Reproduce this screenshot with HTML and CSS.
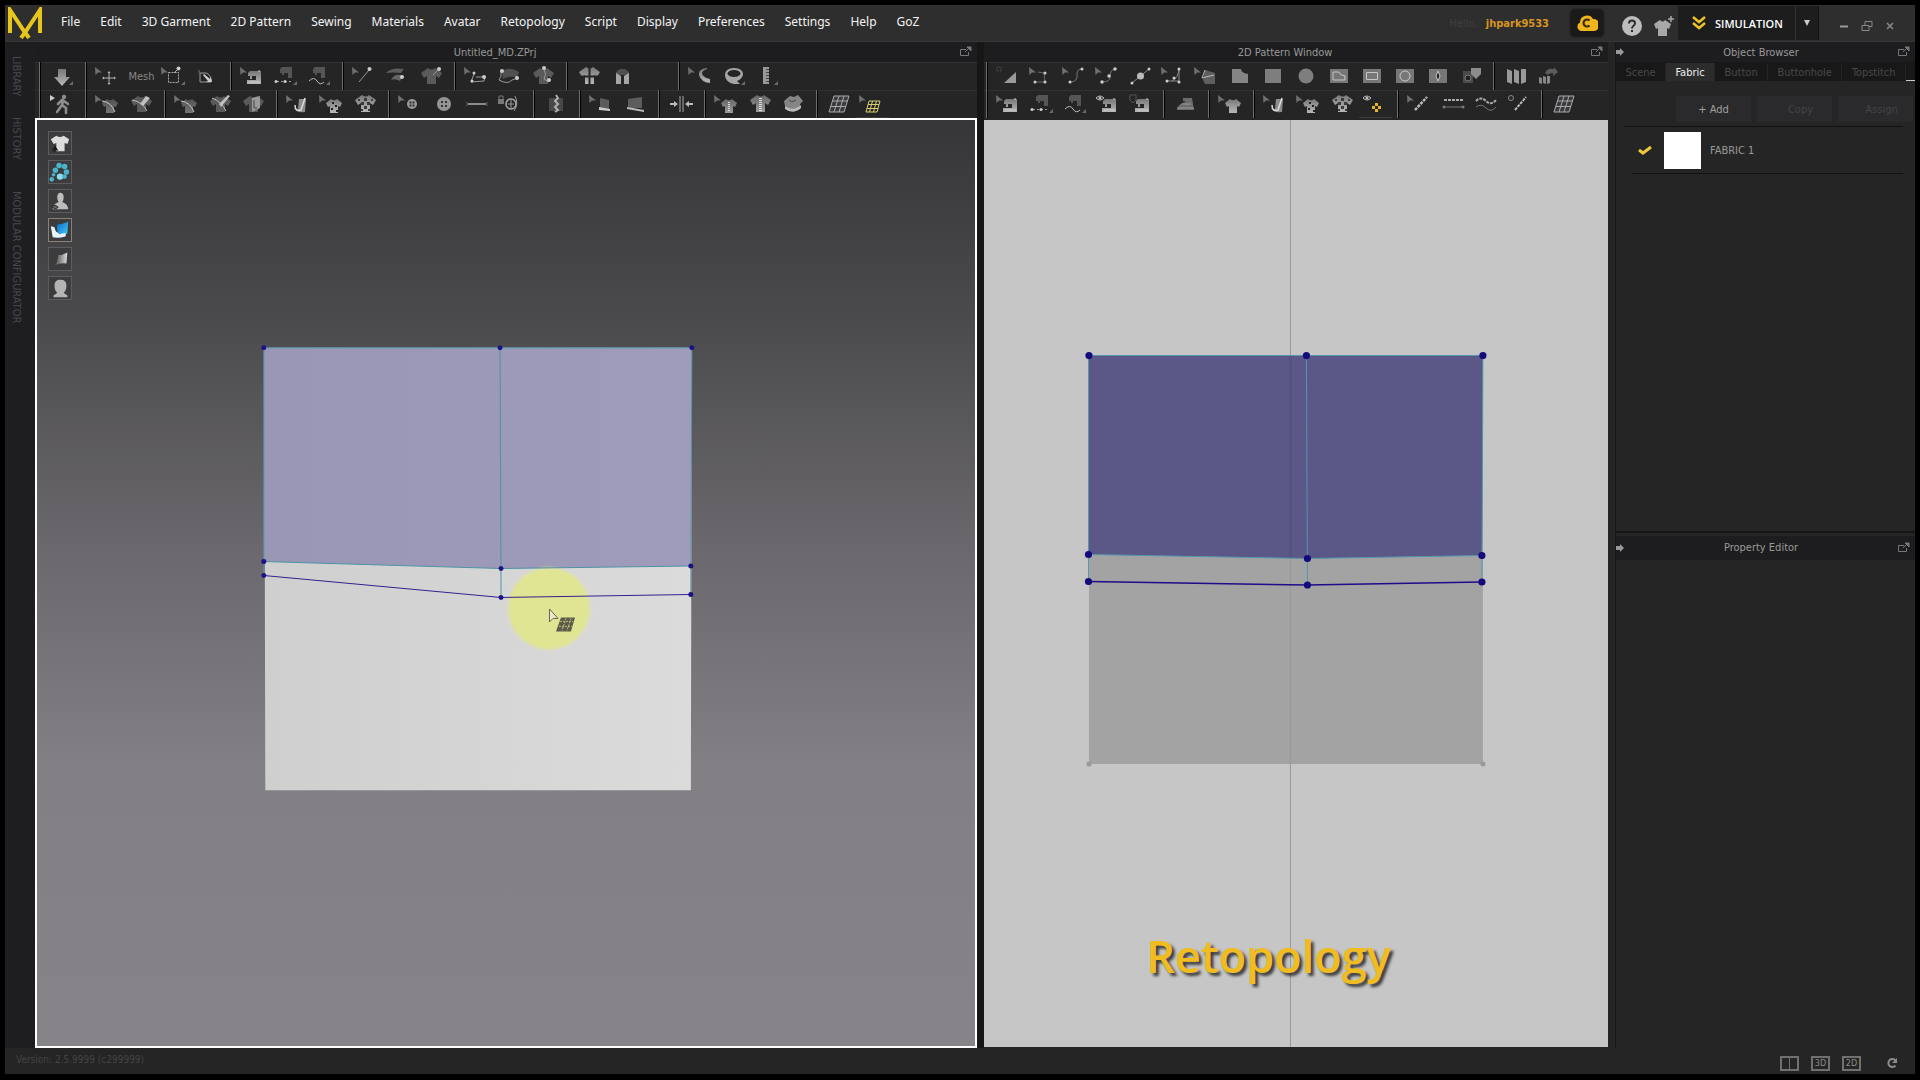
FILE: index.html
```html
<!DOCTYPE html>
<html lang="en">
<head>
  <meta charset="UTF-8">
  <meta name="viewport" content="width=device-width, initial-scale=1.0">
  <title>Untitled_MD.ZPrj</title>
  <link rel="stylesheet" href="styles.css">
</head>
<body>
  <!-- icon shapes, each tool icon is drawn on a 33x28 board -->
  <svg class="defs" aria-hidden="true">
    <defs>
      <linearGradient id="g-cloth" x1="0" y1="0" x2="1" y2="0">
        <stop offset="0" stop-color="#d0cfd0"/>
        <stop offset="1" stop-color="#dcdbdc"/>
      </linearGradient>
      <linearGradient id="g-mesh" x1="0" y1="0" x2="1" y2="0">
        <stop offset="0" stop-color="#9a96b6"/>
        <stop offset="1" stop-color="#9f9bbb"/>
      </linearGradient>
      <linearGradient id="g-metal" x1="0" y1="0" x2="0" y2="1">
        <stop offset="0" stop-color="#777"/>
        <stop offset="1" stop-color="#b8b8b8"/>
      </linearGradient>
      <linearGradient id="g-blue" x1="0" y1="0" x2="1" y2="1">
        <stop offset="0" stop-color="#0a6cc8"/>
        <stop offset="1" stop-color="#48c4f8"/>
      </linearGradient>
      <linearGradient id="g-grey" x1="0" y1="0" x2="1" y2="0">
        <stop offset="0" stop-color="#444"/>
        <stop offset="1" stop-color="#ddd"/>
      </linearGradient>
      <filter id="soft" x="-20%" y="-20%" width="140%" height="140%"><feGaussianBlur stdDeviation="1.5"/></filter>
    </defs>

    <symbol id="cur" viewBox="0 0 33 28"><path d="M3 5l7 5.500h-4l-2.500 2.500z" fill="#707070"/></symbol>
    <symbol id="tri" viewBox="0 0 33 28"><path d="M27 19v4h-4z" fill="#6c6c6c"/></symbol>
    <symbol id="machine" viewBox="0 0 33 28"><path d="M11 11l2-2h11v13h-14v-4h9v-4h-4v3h-2v-3h-2z" fill="url(#g-metal)"/><path d="M22 8v2M12 20h11" stroke="#ccc"/></symbol>
    <symbol id="machine-dim" viewBox="0 0 33 28"><path d="M10 7l2-2h10v11h-4v-5h-4v2h-2v-2h-2z" fill="#555"/></symbol>
    <symbol id="shirt-s" viewBox="0 0 33 28"><path d="M10 13l5-4q3 2.500 6 0l5 4-2 4-2-1v7h-8v-7l-2 1z" fill="url(#g-metal)"/></symbol>
    <symbol id="shirt-l" viewBox="0 0 33 28"><path d="M6 10l7-5q4 3 7 0l7 5-3 5-3-2v9h-9v-9l-3 2z" fill="url(#g-metal)"/></symbol>
    <symbol id="shirt-d" viewBox="0 0 33 28"><path d="M6 11l7-5q4 3 7 0l7 5-3 5-3-2v8h-9v-8l-3 2z" fill="#5a5a5a"/></symbol>
    <symbol id="eye" viewBox="0 0 33 28"><path d="M4 8q3.500-4 8 0q-4 4-8 0z" fill="none" stroke="#bbb"/><circle cx="8" cy="8" r="1.500" fill="#bbb"/></symbol>

    <symbol id="i-down" viewBox="0 0 33 28"><path d="M12 7h8v8h4l-8 9-8-9h4z" fill="url(#g-metal)"/><use href="#tri"/></symbol>
    <symbol id="i-move" viewBox="0 0 33 28"><use href="#cur"/><path d="M17 10v12M11 16h12" stroke="#b5b5b5" fill="none"/><path d="M17 9l1.500 2h-3zM17 23l1.500-2h-3zM10 16l2-1.500v3zM24 16l-2-1.500v3z" fill="#b5b5b5"/></symbol>
    <symbol id="i-box" viewBox="0 0 33 28"><use href="#cur"/><path d="M10.500 10.500h10v10h-10z" fill="none" stroke="#aaa" stroke-dasharray="2 1"/><path d="M16 11l4-4" stroke="#aaa"/><circle cx="20.500" cy="6.500" r="2" fill="#ccc"/><use href="#tri"/></symbol>
    <symbol id="i-fold" viewBox="0 0 33 28"><path d="M9 11h6q5 1 5 9H9z" fill="none" stroke="#999"/><path d="M13 12l6 5 1-2 1 5h-6l2-1-5-6z" fill="#ccc"/><path d="M8 8v3" stroke="#777"/></symbol>
    <symbol id="i-sew" viewBox="0 0 33 28"><use href="#cur"/><use href="#machine"/></symbol>
    <symbol id="i-sewseg" viewBox="0 0 33 28"><use href="#machine-dim"/><path d="M7 19.500h14" stroke="#999" stroke-dasharray="2 2"/><circle cx="6" cy="19.500" r="1.500" fill="#ccc"/><circle cx="15" cy="19.500" r="1.500" fill="#ccc"/><use href="#tri"/></symbol>
    <symbol id="i-sewfree" viewBox="0 0 33 28"><use href="#machine-dim"/><path d="M6 19q5-5 8 0t7 1" fill="none" stroke="#bbb"/><use href="#tri"/></symbol>
    <symbol id="i-pin" viewBox="0 0 33 28"><use href="#cur"/><path d="M10 20L20 8" stroke="#999"/><circle cx="20.500" cy="7" r="2" fill="#ccc"/></symbol>
    <symbol id="i-roll" viewBox="0 0 33 28"><path d="M4 11q5-6 18-4l-3 4q-8-1-15 0z" fill="#5c5c5c"/><path d="M9 18q4-8 12-4l-3 5q-5-3-9-1z" fill="#666"/><circle cx="20" cy="15" r="2" fill="#ccc"/></symbol>
    <symbol id="i-tack" viewBox="0 0 33 28"><use href="#shirt-d"/><path d="M18 13l5-5" stroke="#999"/><circle cx="24" cy="7" r="2" fill="#ccc"/></symbol>
    <symbol id="i-curve" viewBox="0 0 33 28"><use href="#cur"/><path d="M13 12l-3 8 13-1 1-4-9 0" fill="none" stroke="#999"/><circle cx="13" cy="11" r="1.500" fill="#ccc"/><circle cx="11" cy="19" r="1.500" fill="#ccc"/><circle cx="23" cy="15" r="2" fill="#ccc"/></symbol>
    <symbol id="i-curve2" viewBox="0 0 33 28"><path d="M8 9q8-5 17 1l-2 6q-7-3-14 1z" fill="#505050"/><path d="M7 9q1 6-2 9 9 5 13 0l6-2" fill="none" stroke="#999"/><circle cx="8" cy="9" r="2" fill="#ccc"/><circle cx="23" cy="16" r="2" fill="#ccc"/></symbol>
    <symbol id="i-curve3" viewBox="0 0 33 28"><use href="#shirt-d"/><path d="M17 7q3 6 0 10l5 3" fill="none" stroke="#999"/><circle cx="17" cy="6" r="2" fill="#ccc"/><circle cx="22" cy="18" r="2" fill="#ccc"/></symbol>
    <symbol id="i-shirt4" viewBox="0 0 33 28"><use href="#shirt-l"/><path d="M16.500 4v20M8 14.500h17" stroke="#252525" stroke-width="2"/></symbol>
    <symbol id="i-vest" viewBox="0 0 33 28"><path d="M10 10l4-3h5l4 3v3h-13z" fill="#505050"/><path d="M10 11l5 3v8h-5zM23 11l-5 3v8h5z" fill="#a5a5a5"/></symbol>
    <symbol id="i-tape" viewBox="0 0 33 28"><use href="#cur"/><path d="M22 6q-9 1-8 7 2 7 11 8v-4q-8-2-8-6 0-2 5-4z" fill="url(#g-metal)"/></symbol>
    <symbol id="i-ring" viewBox="0 0 33 28"><path d="M16 6c6 0 9 3 9 6s-3 6-6 7l3 3h-6c-6-1-9-5-9-9 0-4 3-7 9-7z" fill="#a5a5a5"/><ellipse cx="16" cy="11.500" rx="6.500" ry="3.500" fill="#252525"/><use href="#tri"/></symbol>
    <symbol id="i-ruler" viewBox="0 0 33 28"><path d="M12 5h6v17h-6z" fill="#999"/><path d="M15 7.500h3M15 10.500h3M15 13.500h3M15 16.500h3M15 19.500h3" stroke="#444"/><use href="#tri"/></symbol>

    <symbol id="i-walk" viewBox="0 0 33 28"><path d="M4 5l5 3-5 3z" fill="#ccc"/><circle cx="18" cy="7" r="2.200" fill="#8c8c8c"/><path d="M17 10l-1 6M16 10l-4 4M18 11l4 3M16 15l-5 7M16 15l4 3 0 5" stroke="#8c8c8c" stroke-width="2.600" stroke-linecap="round" fill="none"/></symbol>
    <symbol id="i-line" viewBox="0 0 33 28"><use href="#cur"/><use href="#shirt-s" opacity=".55"/><path d="M10 11q9 1 13 11" fill="none" stroke="#ccc"/></symbol>
    <symbol id="i-brush" viewBox="0 0 33 28"><use href="#shirt-d"/><path d="M7 10q11 2 15 11" fill="none" stroke="#bbb"/><path d="M15 14l6-8 4 2-7 8z" fill="#c0c0c0"/></symbol>
    <symbol id="i-check" viewBox="0 0 33 28"><use href="#shirt-d"/><path d="M8 8q10 4 14 13" fill="none" stroke="#bbb"/><path d="M15 14l9-9 2 1-9 11z" fill="#c0c0c0"/></symbol>
    <symbol id="i-layer" viewBox="0 0 33 28"><use href="#shirt-d"/><path d="M15 8l8-2v12l-8 4z" fill="#999"/><path d="M17 10v8h3" stroke="#444" fill="none"/></symbol>
    <symbol id="i-texture" viewBox="0 0 33 28"><use href="#cur"/><path d="M16 9h7l-1 13q-9 1-11-4l4 1z" fill="#8c8c8c"/><path d="M12 15q0 7 6 5l4-12" fill="none" stroke="#ddd" stroke-width="1.500"/></symbol>
    <symbol id="i-graphic" viewBox="0 0 33 28"><use href="#cur"/><use href="#shirt-s"/><path d="M16 12h2v2h-2zM19 15h2v2h-2zM15 18h2v2h-2zM20 20h2v2h-2z" fill="#222"/></symbol>
    <symbol id="i-graphic2" viewBox="0 0 33 28"><use href="#shirt-l"/><path d="M15 8h3v3h-3zM12 12h3v3h-3zM18 12h3v3h-3zM15 16h3v3h-3zM9 9h2v2H9zM22 9h2v2h-2zM19 19h2v2h-2zM12 19h2v2h-2z" fill="#3a3a3a"/></symbol>
    <symbol id="i-btn" viewBox="0 0 33 28"><use href="#cur"/><circle cx="17" cy="14" r="5" fill="#999"/><path d="M14.500 11.500h2v2h-2zM17.500 11.500h2v2h-2zM14.500 14.500h2v2h-2zM17.500 14.500h2v2h-2z" fill="#333"/></symbol>
    <symbol id="i-btn2" viewBox="0 0 33 28"><circle cx="16" cy="14" r="7" fill="#949494"/><path d="M13 11h2v2h-2zM17 11h2v2h-2zM13 15h2v2h-2zM17 15h2v2h-2z" fill="#333"/></symbol>
    <symbol id="i-hole" viewBox="0 0 33 28"><path d="M7 14h18" stroke="#8c8c8c" stroke-width="2"/><path d="M6 12v4M26 12v4" stroke="#666"/></symbol>
    <symbol id="i-lock" viewBox="0 0 33 28"><path d="M4 9h6v5H4z" fill="#777"/><path d="M5 9V6h4v3" stroke="#777" fill="none"/><circle cx="17" cy="14" r="5" fill="none" stroke="#aaa" stroke-width="1.500"/><path d="M14 14h6M17 10v8M21 6q4 8-1 15" stroke="#999" fill="none"/></symbol>
    <symbol id="i-zip" viewBox="0 0 33 28"><path d="M9 8h14v13H9z" fill="#484848"/><path d="M16 5l2 3-3 3 3 3-3 3 3 3-3 2" stroke="#b0b0b0" stroke-width="2" fill="none"/></symbol>
    <symbol id="i-steam" viewBox="0 0 33 28"><use href="#cur"/><path d="M14 8l9 2v9H14z" fill="#5c5c5c"/><path d="M13 17l11 2v2l-11-1z" fill="#ccc"/></symbol>
    <symbol id="i-steam2" viewBox="0 0 33 28"><path d="M9 9l14-2v11H9z" fill="#5c5c5c"/><path d="M8 17l17 3v2L8 19z" fill="#bbb"/></symbol>
    <symbol id="i-merge" viewBox="0 0 33 28"><path d="M15 6v16M18 6v16" stroke="#666" stroke-width="2"/><path d="M5 14h4M28 14h-4" stroke="#bbb" stroke-width="2"/><path d="M9 11l4 3-4 3zM24 11l-4 3 4 3z" fill="#bbb"/></symbol>
    <symbol id="i-zipshirt" viewBox="0 0 33 28"><use href="#cur"/><use href="#shirt-s" opacity=".8"/><path d="M18 12v10" stroke="#ddd" stroke-width="2" stroke-dasharray="1 1"/></symbol>
    <symbol id="i-zipshirt2" viewBox="0 0 33 28"><use href="#shirt-l" opacity=".8"/><path d="M16.500 8v14" stroke="#ddd" stroke-width="3" stroke-dasharray="1 1"/></symbol>
    <symbol id="i-wrap" viewBox="0 0 33 28"><path d="M7 11l6-5 4 1 4-2 5 6-3 3v4q-4 5-10 2l-5-4z" fill="#858585"/><path d="M8 16q8 6 16-1v3q-8 7-16 1z" fill="#bbb"/><path d="M12 10l3 2 4-2" stroke="#444" fill="none"/></symbol>
    <symbol id="i-mesh" viewBox="0 0 33 28"><path d="M11 6h15l-5 16H6z" fill="#3a3a3e" stroke="#aaa"/><path d="M16 6l-5 16M21 6l-5 16M9.500 11h15M8 16.500h15" stroke="#aaa" fill="none"/></symbol>
    <symbol id="i-meshon" viewBox="0 0 33 28"><use href="#cur"/><path d="M13 11h11l-3 11H10zM16.500 11l-3 11M20.500 11l-3 11M12 14.500h11M11 18.500h11" stroke="#d6cf70" fill="none"/></symbol>

    <symbol id="i-scale" viewBox="0 0 33 28"><path d="M23 10v11H11z" fill="#999"/><path d="M4 5h4v4H4z" fill="none" stroke="#555" stroke-dasharray="1 1"/></symbol>
    <symbol id="i-pt" viewBox="0 0 33 28"><use href="#cur"/><path d="M8 20h11l-1-9-6-1" fill="none" stroke="#666"/><circle cx="9" cy="20" r="1.500" fill="#ccc"/><circle cx="19" cy="20" r="1.500" fill="#ccc"/><circle cx="19" cy="11" r="1.500" fill="#ccc"/></symbol>
    <symbol id="i-cv" viewBox="0 0 33 28"><use href="#cur"/><path d="M11 20q8 0 7-8 0-5 5-5" fill="none" stroke="#777"/><circle cx="11" cy="20" r="1.500" fill="#ccc"/><circle cx="23" cy="7" r="1.500" fill="#ccc"/></symbol>
    <symbol id="i-cv2" viewBox="0 0 33 28"><use href="#cur"/><path d="M10 20q9 0 8-6 0-6 5-7" fill="none" stroke="#777"/><circle cx="10" cy="20" r="1.700" fill="#ccc"/><circle cx="17" cy="14" r="1.700" fill="#ccc"/><circle cx="23" cy="7" r="1.700" fill="#ccc"/></symbol>
    <symbol id="i-split" viewBox="0 0 33 28"><path d="M7 21L24 7" stroke="#888"/><circle cx="7" cy="21" r="1.500" fill="#ccc"/><circle cx="24" cy="7" r="1.500" fill="#ccc"/><circle cx="15.500" cy="14" r="3.500" fill="#bbb"/></symbol>
    <symbol id="i-seam" viewBox="0 0 33 28"><use href="#cur"/><path d="M9 19h12V7q-1 9-7 12" fill="none" stroke="#888"/><circle cx="9" cy="19" r="1.500" fill="#ccc"/><circle cx="16" cy="16" r="1.500" fill="#ccc"/><circle cx="21" cy="7" r="1.500" fill="#ccc"/><circle cx="21" cy="20" r="1.500" fill="#ccc"/></symbol>
    <symbol id="i-pleat" viewBox="0 0 33 28"><use href="#cur"/><path d="M14 8l10 3v11H14l-2-4z" fill="#5e5e5e"/><path d="M14 8l-3 8 12-3" fill="none" stroke="#bbb"/></symbol>
    <symbol id="i-poly" viewBox="0 0 33 28"><path d="M8 7h9q0 4 7 5v9H8z" fill="#858585"/></symbol>
    <symbol id="i-rect" viewBox="0 0 33 28"><path d="M8 7h16v14H8z" fill="#7e7e7e"/></symbol>
    <symbol id="i-circle" viewBox="0 0 33 28"><circle cx="16" cy="14" r="7.500" fill="#7e7e7e"/></symbol>
    <symbol id="i-inpoly" viewBox="0 0 33 28"><path d="M7 7h18v14H7z" fill="#777"/><path d="M10 10h6q0 3 6 4v4H10z" fill="none" stroke="#c8c8c8"/></symbol>
    <symbol id="i-inrect" viewBox="0 0 33 28"><path d="M7 7h18v14H7z" fill="#777"/><path d="M10.500 10.500h11v7h-11z" fill="none" stroke="#c8c8c8"/></symbol>
    <symbol id="i-incircle" viewBox="0 0 33 28"><path d="M7 7h18v14H7z" fill="#777"/><circle cx="16" cy="14" r="5" fill="none" stroke="#c8c8c8"/></symbol>
    <symbol id="i-dart" viewBox="0 0 33 28"><path d="M7 7h18v14H7z" fill="#777"/><path d="M16 9l2 5-2 5-2-5z" fill="#222" stroke="#c8c8c8"/></symbol>
    <symbol id="i-trace" viewBox="0 0 33 28"><path d="M8 9h10v12H8z" fill="#4a4a4a"/><path d="M16 6h10v6l-5 5-5-5z" fill="#8c8c8c"/><circle cx="13" cy="16" r="3" fill="#222" stroke="#777"/></symbol>
    <symbol id="i-pleats" viewBox="0 0 33 28"><path d="M7 7l5 2v13l-5-2zM14 7l5 2v13l-5-2zM21 7h5v13l-5 2z" fill="#999"/></symbol>
    <symbol id="i-pleats2" viewBox="0 0 33 28"><path d="M6 15l3 1v6l-3-1zM10 14l3 1v7l-3-1zM14 14h3v7l-3 1z" fill="#888"/><path d="M12 11q2-5 9-4v-2l4 5-5 4v-3q-4 0-5 2z" fill="#5c5c5c"/></symbol>
    <symbol id="i-sewshow" viewBox="0 0 33 28"><use href="#eye"/><use href="#machine"/></symbol>
    <symbol id="i-sewlen" viewBox="0 0 33 28"><path d="M5 5h6v5l-3 3-3-3z" fill="none" stroke="#555"/><use href="#machine"/></symbol>
    <symbol id="i-iron" viewBox="0 0 33 28"><path d="M7 20q1-7 9-8l-3-1V8h9l2 12z" fill="#6c6c6c"/><path d="M7 18h17M12 14h9" stroke="#999"/></symbol>
    <symbol id="i-shirtsel" viewBox="0 0 33 28"><use href="#cur"/><use href="#shirt-s"/></symbol>
    <symbol id="i-texshow" viewBox="0 0 33 28"><use href="#eye"/><path d="M16 13h3v3h-3zM16 19h3v3h-3zM13 16h3v3h-3zM19 16h3v3h-3z" fill="#e8b32c"/></symbol>
    <symbol id="i-stitch" viewBox="0 0 33 28"><use href="#cur"/><path d="M11 20L23 7" stroke="#bbb" stroke-width="2.500" stroke-dasharray="3 1"/></symbol>
    <symbol id="i-stitch2" viewBox="0 0 33 28"><path d="M7 10h19" stroke="#aaa" stroke-width="2" stroke-dasharray="3 1"/><path d="M7 17h19" stroke="#777"/><circle cx="7" cy="17" r="1.500" fill="#777"/><circle cx="26" cy="17" r="1.500" fill="#777"/></symbol>
    <symbol id="i-stitch3" viewBox="0 0 33 28"><path d="M6 11q5-5 10 0t10-1" fill="none" stroke="#aaa" stroke-width="2" stroke-dasharray="3 1"/><path d="M6 17q5-4 10 1t10-1" fill="none" stroke="#777"/></symbol>
    <symbol id="i-stitch4" viewBox="0 0 33 28"><circle cx="8" cy="8" r="2.500" fill="none" stroke="#888"/><path d="M12 20L23 7" stroke="#bbb" stroke-width="2" stroke-dasharray="3 1"/></symbol>

    <symbol id="i-popout" viewBox="0 0 12 12"><path d="M6 3.500H.5v6h8V6" fill="none" stroke="#777"/><path d="M5 6l4-4M7 1h4v4z" fill="#777" stroke="#777"/></symbol>
    <symbol id="i-dock" viewBox="0 0 8 8"><path d="M0 2h4V0l4 4-4 4V6H0z" fill="#999"/></symbol>
  </svg>

  <div class="app">
    <header class="topbar">
      <svg class="logo" viewBox="0 0 34 32" role="img" aria-label="MD"><path d="M2 26V3l14 21 5 7M32 26V3L18 24l-5 7" fill="none" stroke="#e6c51c" stroke-width="4"/></svg>
      <nav class="menu">
        <a href="#file">File</a>
        <a href="#edit">Edit</a>
        <a href="#garment">3D Garment</a>
        <a href="#pattern">2D Pattern</a>
        <a href="#sewing">Sewing</a>
        <a href="#materials">Materials</a>
        <a href="#avatar">Avatar</a>
        <a href="#retopology">Retopology</a>
        <a href="#script">Script</a>
        <a href="#display">Display</a>
        <a href="#preferences">Preferences</a>
        <a href="#settings">Settings</a>
        <a href="#help">Help</a>
        <a href="#goz">GoZ</a>
      </nav>
      <div class="account">
        <span class="hello">Hello,</span>
        <a href="#account" class="user">jhpark9533</a>
      </div>
      <button class="cloud" aria-label="Cloud"><svg viewBox="0 0 22 18"><path d="M5 17a4.500 4.500 0 0 1-1-8.500A7 7 0 0 1 17 5a5 5 0 0 1 1 12z" fill="#f0b51e"/><path d="M13.500 6.500a3.500 3.500 0 1 0 0 5" fill="none" stroke="#3a2a08" stroke-width="2.200"/></svg></button>
      <div class="quick">
        <button aria-label="Help"><svg viewBox="0 0 22 22"><circle cx="11" cy="11" r="10" fill="#bdbdbd"/><path d="M8 8.500q0-3 3-3t3 2.800q0 1.700-1.700 2.700-1.300.8-1.300 2.500" fill="none" stroke="#2c2c2c" stroke-width="2"/><path d="M10 15h2v2h-2z" fill="#2c2c2c"/></svg></button>
        <button aria-label="Add garment"><svg viewBox="0 0 22 22"><path d="M1 9l6-4q3 3 5 0l6 4-2 5-2-1v8H5v-8l-2 1z" fill="#a8a8a8"/><path d="M18 1v6M15 4h6" stroke="#a8a8a8" stroke-width="1.500"/></svg></button>
      </div>
      <div class="mode">
        <button class="mode-main"><svg viewBox="0 0 14 14"><path d="M1 1l6 5 6-5M1 7l6 5 6-5" fill="none" stroke="#ecc42a" stroke-width="2.500"/></svg>SIMULATION</button>
        <button class="mode-more" aria-label="Choose mode"><svg viewBox="0 0 8 6"><path d="M1 0h6L4 6z" fill="#ccc"/></svg></button>
      </div>
      <div class="winbtns">
        <button aria-label="Minimize"><svg viewBox="0 0 12 12"><path d="M2 6.500h8" stroke="#999" stroke-width="2"/></svg></button>
        <button aria-label="Restore"><svg viewBox="0 0 12 12"><path d="M1 5.500h7v5H1zM4 5V1.500h7v5H8" fill="none" stroke="#888"/></svg></button>
        <button aria-label="Close"><svg viewBox="0 0 12 12"><path d="M3 3l6 6M9 3l-6 6" stroke="#888" stroke-width="1.500"/></svg></button>
      </div>
    </header>

    <div class="workspace">
      <aside class="rail">
        <button>LIBRARY</button>
        <button>HISTORY</button>
        <button>MODULAR CONFIGURATOR</button>
      </aside>

      <main class="panes">
        <section class="pane pane-3d">
          <div class="titlebar"><h2>Untitled_MD.ZPrj</h2><button class="popout" aria-label="Undock"><svg><use href="#i-popout"/></svg></button></div>
          <div class="toolbar">
            <div class="group"><button aria-label="Simulate"><svg><use href="#i-down"/></svg></button></div>
            <div class="group">
              <button aria-label="Select and move"><svg><use href="#i-move"/></svg></button>
              <button class="mesh-label">Mesh</button>
              <button aria-label="Transform"><svg><use href="#i-box"/></svg></button>
              <button aria-label="Fold"><svg><use href="#i-fold"/></svg></button>
            </div>
            <div class="group">
              <button aria-label="Edit sewing"><svg><use href="#i-sew"/></svg></button>
              <button aria-label="Segment sewing"><svg><use href="#i-sewseg"/></svg></button>
              <button aria-label="Free sewing"><svg><use href="#i-sewfree"/></svg></button>
            </div>
            <div class="group">
              <button aria-label="Edit tack"><svg><use href="#i-pin"/></svg></button>
              <button aria-label="Tack"><svg><use href="#i-roll"/></svg></button>
              <button aria-label="Tack on avatar"><svg><use href="#i-tack"/></svg></button>
            </div>
            <div class="group">
              <button aria-label="Edit 3D pen"><svg><use href="#i-curve"/></svg></button>
              <button aria-label="3D pen avatar"><svg><use href="#i-curve2"/></svg></button>
              <button aria-label="3D pen garment"><svg><use href="#i-curve3"/></svg></button>
            </div>
            <div class="group">
              <button aria-label="Arrange"><svg><use href="#i-shirt4"/></svg></button>
              <button aria-label="Drape"><svg><use href="#i-vest"/></svg></button>
              <span class="blank"></span>
            </div>
            <div class="group">
              <button aria-label="Edit tape"><svg><use href="#i-tape"/></svg></button>
              <button aria-label="Circumference"><svg><use href="#i-ring"/></svg></button>
              <button aria-label="Length"><svg><use href="#i-ruler"/></svg></button>
            </div>
          </div>
          <div class="toolbar">
            <div class="group"><button aria-label="Walk"><svg><use href="#i-walk"/></svg></button></div>
            <div class="group">
              <button aria-label="Edit line"><svg><use href="#i-line"/></svg></button>
              <button aria-label="Brush"><svg><use href="#i-brush"/></svg></button>
            </div>
            <div class="group">
              <button aria-label="Edit style line"><svg><use href="#i-line"/></svg></button>
              <button aria-label="Style line"><svg><use href="#i-check"/></svg></button>
              <button aria-label="Flatten"><svg><use href="#i-layer"/></svg></button>
            </div>
            <div class="group">
              <button aria-label="Edit texture"><svg><use href="#i-texture"/></svg></button>
              <button aria-label="Edit graphic"><svg><use href="#i-graphic"/></svg></button>
              <button aria-label="Graphic"><svg><use href="#i-graphic2"/></svg></button>
            </div>
            <div class="group">
              <button aria-label="Edit button"><svg><use href="#i-btn"/></svg></button>
              <button aria-label="Button"><svg><use href="#i-btn2"/></svg></button>
              <button aria-label="Buttonhole"><svg><use href="#i-hole"/></svg></button>
              <button aria-label="Fasten button"><svg><use href="#i-lock"/></svg></button>
            </div>
            <div class="group"><button aria-label="Zipper"><svg><use href="#i-zip"/></svg></button></div>
            <div class="group">
              <button aria-label="Edit binding"><svg><use href="#i-steam"/></svg></button>
              <button aria-label="Binding"><svg><use href="#i-steam2"/></svg></button>
            </div>
            <div class="group"><button aria-label="Merge"><svg><use href="#i-merge"/></svg></button></div>
            <div class="group">
              <button aria-label="Edit measure"><svg><use href="#i-zipshirt"/></svg></button>
              <button aria-label="Measure"><svg><use href="#i-zipshirt2"/></svg></button>
              <button aria-label="Wrap measure"><svg><use href="#i-wrap"/></svg></button>
            </div>
            <div class="group">
              <button aria-label="Quad mesh"><svg><use href="#i-mesh"/></svg></button>
              <button class="active" aria-label="Retopology"><svg><use href="#i-meshon"/></svg></button>
            </div>
          </div>
          <div class="view view-3d">
            <svg class="scene" viewBox="37 120 938 927" role="img" aria-label="Garment">
              <path d="M264 348h428l-1 443H265z" fill="url(#g-cloth)"/>
              <path d="M263.500 348H692l-1 218.500L501 569 263.500 562z" fill="url(#g-mesh)"/>
              <circle cx="549" cy="609" r="41" fill="#e0e594" filter="url(#soft)"/>
              <path d="M263.500 576V348H692l-1 247M500 348l1 250M263.500 562l237.500 7 190-2.500" fill="none" stroke="#4d93a5"/>
              <path d="M263.500 576L501 598l190-3" fill="none" stroke="#32208c"/>
              <g fill="#1c1286">
                <circle cx="263.500" cy="348" r="2.500"/><circle cx="500" cy="348" r="2.500"/><circle cx="692" cy="348" r="2.500"/>
                <circle cx="263.500" cy="562" r="2.500"/><circle cx="501" cy="569" r="2.500"/><circle cx="691" cy="566.500" r="2.500"/>
                <circle cx="263.500" cy="576" r="2.500"/><circle cx="501" cy="598" r="2.500"/><circle cx="691" cy="595" r="2.500"/>
              </g>
              <path d="M549.500 609.500v13l3.500-3.500h5z" fill="#eee9c8" stroke="#66664c"/>
              <path d="M561 618h14l-4 14h-15z" fill="#5c5c48"/>
              <path d="M560 622h13M559 627h13M566 619l-4 12M571 619l-4 12" stroke="#b8bb80" stroke-dasharray="2 1"/>
            </svg>
            <div class="view-tools">
              <button aria-label="Show garment"><svg viewBox="0 0 24 24"><path d="M2 8l6-4q4 3 8 0l6 4-2 5-3-1v9H8v-9l-3 1z" fill="#dcdcdc"/><circle cx="6" cy="19" r="2.500" fill="#222"/><path d="M6 15v3l4 2" stroke="#222"/></svg></button>
              <button aria-label="Show trims"><svg viewBox="0 0 24 24"><g fill="#4ab4cc"><circle cx="7" cy="10" r="3"/><circle cx="11" cy="5" r="3"/><circle cx="17" cy="6" r="3"/><circle cx="19" cy="12" r="3"/><circle cx="12" cy="17" r="3.500" fill="#8adcec"/><circle cx="17" cy="17" r="2.500"/><circle cx="5" cy="15" r="2"/><circle cx="3" cy="20" r="2.500"/></g></svg></button>
              <button aria-label="Show avatar"><svg viewBox="0 0 24 24"><path d="M9 8q0-5 3.500-5T16 8q0 4-1.500 5 6 2 6.500 8H4q0-6 6.500-8Q9 12 9 8z" fill="#bcbcbc"/><path d="M3 18q4-3 7 1-4 3-7-1z" fill="#666" stroke="#222"/></svg></button>
              <button class="on" aria-label="Textured surface"><svg viewBox="0 0 24 24"><path d="M2 8l4 1q1 6 5 6l8-1-1 5q-7 2-14 1-1-6-2-12z" fill="#e8f4fc"/><path d="M9 6q5 0 12-3l-1 13q-5-1-9 1-3-5-2-11z" fill="url(#g-blue)"/></svg></button>
              <button aria-label="Thick surface"><svg viewBox="0 0 24 24"><path d="M10 8q5 0 10-3l-1 12q-6-1-13 2 4-4 4-11z" fill="url(#g-grey)"/></svg></button>
              <button aria-label="Avatar surface"><svg viewBox="0 0 24 24"><path d="M6 9q0-6 6.500-6T19 9q0 6-3 8 1 2 4 3v2H5v-2q3-1 4-3-3-2-3-8z" fill="#b4b4b4"/></svg></button>
            </div>
          </div>
        </section>

        <section class="pane pane-2d">
          <div class="titlebar"><h2>2D Pattern Window</h2><button class="popout" aria-label="Undock"><svg><use href="#i-popout"/></svg></button></div>
          <div class="toolbar">
            <div class="group">
              <button aria-label="Transform pattern"><svg><use href="#i-scale"/></svg></button>
              <button aria-label="Edit pattern"><svg><use href="#i-pt"/></svg></button>
              <button aria-label="Edit curve point"><svg><use href="#i-cv"/></svg></button>
              <button aria-label="Edit curvature"><svg><use href="#i-cv2"/></svg></button>
              <button aria-label="Add point"><svg><use href="#i-split"/></svg></button>
              <button aria-label="Seam allowance"><svg><use href="#i-seam"/></svg></button>
              <button aria-label="Spread"><svg><use href="#i-pleat"/></svg></button>
              <button aria-label="Polygon"><svg><use href="#i-poly"/></svg></button>
              <button aria-label="Rectangle"><svg><use href="#i-rect"/></svg></button>
              <button aria-label="Circle"><svg><use href="#i-circle"/></svg></button>
              <button aria-label="Internal polygon"><svg><use href="#i-inpoly"/></svg></button>
              <button aria-label="Internal rectangle"><svg><use href="#i-inrect"/></svg></button>
              <button aria-label="Internal circle"><svg><use href="#i-incircle"/></svg></button>
              <button aria-label="Dart"><svg><use href="#i-dart"/></svg></button>
              <button aria-label="Trace"><svg><use href="#i-trace"/></svg></button>
            </div>
            <div class="group">
              <button aria-label="Pleats fold"><svg><use href="#i-pleats"/></svg></button>
              <button aria-label="Pleats sewing"><svg><use href="#i-pleats2"/></svg></button>
            </div>
          </div>
          <div class="toolbar">
            <div class="group">
              <button aria-label="Edit sewing"><svg><use href="#i-sew"/></svg></button>
              <button aria-label="Segment sewing"><svg><use href="#i-sewseg"/></svg></button>
              <button aria-label="Free sewing"><svg><use href="#i-sewfree"/></svg></button>
              <button aria-label="Show sewing"><svg><use href="#i-sewshow"/></svg></button>
              <button aria-label="Check sewing length"><svg><use href="#i-sewlen"/></svg></button>
            </div>
            <div class="group"><button aria-label="Iron"><svg><use href="#i-iron"/></svg></button></div>
            <div class="group"><button aria-label="Select garment"><svg><use href="#i-shirtsel"/></svg></button></div>
            <div class="group">
              <button aria-label="Edit texture"><svg><use href="#i-texture"/></svg></button>
              <button aria-label="Edit graphic"><svg><use href="#i-graphic"/></svg></button>
              <button aria-label="Graphic"><svg><use href="#i-graphic2"/></svg></button>
              <button class="active" aria-label="Show texture"><svg><use href="#i-texshow"/></svg></button>
            </div>
            <div class="group">
              <button aria-label="Edit topstitch"><svg><use href="#i-stitch"/></svg></button>
              <button aria-label="Segment topstitch"><svg><use href="#i-stitch2"/></svg></button>
              <button aria-label="Free topstitch"><svg><use href="#i-stitch3"/></svg></button>
              <button aria-label="Seam topstitch"><svg><use href="#i-stitch4"/></svg></button>
            </div>
            <div class="group"><button aria-label="Grid"><svg><use href="#i-mesh"/></svg></button></div>
          </div>
          <div class="view view-2d">
            <svg class="scene" viewBox="984 120 624 927" role="img" aria-label="Pattern">
              <path d="M1290.500 120v927" stroke="#979797"/>
              <path d="M1089 355h394v409h-394z" fill="#a3a3a3"/>
              <circle cx="1089" cy="764" r="2.500" fill="#999"/><circle cx="1483" cy="764" r="2.500" fill="#999"/>
              <path d="M1290.500 555v209" stroke="#999"/>
              <path d="M1089 355.500h394l-1 200-174.500 3-219-4z" fill="#5b5786"/>
              <path d="M1290.500 356v202" stroke="#555281" stroke-width="3"/>
              <path d="M1088.500 581V355.500H1483L1482 582M1306.500 355.500l1 229M1088.500 554.500l219 4 174.500-3" fill="none" stroke="#5496b0"/>
              <path d="M1088.500 581.500l219 3.500 174.500-3" fill="none" stroke="#1e0c88" stroke-width="1.500"/>
              <g fill="#140a7c">
                <circle cx="1089" cy="355.500" r="3.600"/><circle cx="1306.500" cy="355.500" r="3.600"/><circle cx="1483" cy="355.500" r="3.600"/>
                <circle cx="1088.500" cy="554.500" r="3.600"/><circle cx="1307.500" cy="558.500" r="3.600"/><circle cx="1482" cy="555.500" r="3.600"/>
                <circle cx="1088.500" cy="581.500" r="3.600"/><circle cx="1307.500" cy="585" r="3.600"/><circle cx="1482" cy="582" r="3.600"/>
              </g>
            </svg>
            <p class="caption">Retopology</p>
          </div>
        </section>
      </main>

      <aside class="side">
        <section class="browser">
          <div class="titlebar"><button class="dock" aria-label="Collapse"><svg><use href="#i-dock"/></svg></button><h2>Object Browser</h2><button class="popout" aria-label="Undock"><svg><use href="#i-popout"/></svg></button></div>
          <div class="tabs">
            <button>Scene</button>
            <button class="active">Fabric</button>
            <button>Button</button>
            <button>Buttonhole</button>
            <button>Topstitch</button>
            <span class="more"></span>
          </div>
          <div class="actions">
            <button><span>+</span> Add</button>
            <button disabled>Copy</button>
            <button disabled>Assign</button>
          </div>
          <ul class="fabrics">
            <li>
              <svg viewBox="0 0 14 10"><path d="M1 5l4 3 8-6" fill="none" stroke="#ecc83c" stroke-width="3"/></svg>
              <span class="swatch"></span>
              <span>FABRIC 1</span>
            </li>
          </ul>
        </section>
        <section class="property">
          <div class="titlebar"><button class="dock" aria-label="Collapse"><svg><use href="#i-dock"/></svg></button><h2>Property Editor</h2><button class="popout" aria-label="Undock"><svg><use href="#i-popout"/></svg></button></div>
        </section>
      </aside>
    </div>

    <footer class="statusbar">
      <span>Version: 2.5.9999 (c299999)</span>
      <div class="layouts">
        <button aria-label="Split view"><i></i></button>
        <button>3D</button>
        <button>2D</button>
        <button class="reset" aria-label="Reset layout"><svg viewBox="0 0 12 12"><path d="M9.500 8.500a4 4 0 1 1 0-5" fill="none" stroke="#8c8c8c" stroke-width="2"/><path d="M11 1v5H6z" fill="#8c8c8c"/></svg></button>
      </div>
    </footer>
  </div>
</body>
</html>
```
FILE: styles.css
```css
* {
  box-sizing: border-box;
}
body {
  margin: 0;
  padding: 5px 5px 6px;
  height: 100vh;
  background: #000;
  color: #999;
  font-family: "DejaVu Sans Condensed", "Noto Sans", sans-serif;
  font-size: 11px;
  overflow: hidden;
}
button {
  padding: 0;
  border: 0;
  background: none;
  color: inherit;
  font: inherit;
  cursor: pointer;
}
svg {
  display: block;
}
.defs {
  position: absolute;
  width: 0;
  height: 0;
}
.app {
  height: 100%;
  display: flex;
  flex-direction: column;
  background: #252525;
}

/* top bar */
.topbar {
  height: 37px;
  display: flex;
  align-items: center;
  background: #2e2e2f;
  border-bottom: 1px solid #363636;
}
.logo {
  width: 34px;
  height: 32px;
  margin-left: 3px;
}
.menu {
  flex: 1;
  display: flex;
  gap: 20px;
  margin-left: 19px;
  padding-bottom: 2px;
  font-family: "Noto Sans", sans-serif;
  font-size: 12px;
  line-height: 20px;
}
.menu a {
  color: #f4f4f4;
  text-decoration: none;
  white-space: nowrap;
}
.account {
  display: flex;
  gap: 8px;
  margin-right: 22px;
}
.hello {
  color: #404040;
}
.user {
  color: #d8951e;
  font-weight: bold;
  text-decoration: none;
}
.cloud {
  width: 32px;
  height: 26px;
  display: flex;
  align-items: center;
  justify-content: center;
  background: #1c1a18;
  border-radius: 4px;
  box-shadow: 0 0 3px #000;
}
.cloud svg {
  width: 22px;
  height: 18px;
}
.quick {
  display: flex;
  gap: 10px;
  margin: 6px 3px 0 18px;
}
.quick svg {
  width: 22px;
  height: 22px;
}
.mode {
  height: 34px;
  display: flex;
  background: #1d1d1e;
  border-right: 1px solid #111;
}
.mode-main {
  width: 118px;
  display: flex;
  align-items: center;
  gap: 9px;
  padding-left: 14px;
  border-right: 1px solid #333;
  color: #fff;
  font-family: "Open Sans", sans-serif;
  font-weight: 600;
}
.mode-main svg {
  width: 14px;
  height: 14px;
}
.mode-more {
  width: 22px;
  display: flex;
  align-items: center;
  justify-content: center;
}
.mode-more svg {
  width: 8px;
  height: 6px;
}
.winbtns {
  display: flex;
  gap: 11px;
  margin: 6px 19px 0;
}
.winbtns svg {
  width: 12px;
  height: 12px;
}

/* work area */
.workspace {
  flex: 1;
  min-height: 0;
  display: flex;
}
.rail {
  width: 30px;
  display: flex;
  flex-direction: column;
  align-items: center;
  gap: 20px;
  padding: 14px 8px 0 0;
  background: #1e1e20;
  color: #48484c;
}
.rail button {
  writing-mode: vertical-rl;
  line-height: 14px;
}
.rail button:last-child {
  margin-top: 12px;
}
.panes {
  flex: 1;
  min-width: 0;
  display: grid;
  grid-template-columns: minmax(0, 151fr) minmax(0, 100fr);
  gap: 7px;
  margin-right: 7px;
  background: #161616;
}
.pane {
  display: flex;
  flex-direction: column;
  background: #252525;
}
.titlebar {
  height: 20px;
  display: flex;
  align-items: center;
  padding-right: 5px;
  background: #1d1d1f;
}
.titlebar h2 {
  flex: 1;
  margin: 0;
  font-size: 11px;
  font-weight: normal;
  text-align: center;
}
.pane .titlebar h2 {
  padding-right: 5px;
}
.popout svg {
  width: 12px;
  height: 12px;
}
.dock svg {
  width: 8px;
  height: 8px;
}
.toolbar {
  height: 28px;
  display: flex;
  padding-left: 4px;
  box-shadow: inset 0 1px #323232;
}
.pane-2d .toolbar {
  padding-left: 2px;
}
.group {
  display: flex;
  padding: 0 5px;
  border-left: 2px ridge #1a1a1a;
}
.pane-3d .group {
  padding-right: 6px;
}
.group svg {
  width: 33px;
  height: 28px;
}
.group button,
.blank {
  width: 33px;
  height: 28px;
}
.group .mesh-label {
  color: #888;
}
.group .active {
  box-shadow: inset 0 -1px #3c3c3c;
}
.view {
  flex: 1;
  min-height: 0;
  position: relative;
}
.view-3d {
  border: 2px solid #fff;
  background: linear-gradient(#363538, #49484b 20%, #69676b 45%, #828085 70%, #868489);
}
.view-2d {
  margin: 2px 0 1px;
  background: #c6c6c6;
}
.scene {
  position: absolute;
  inset: 0;
  width: 100%;
  height: 100%;
}
.view-tools {
  position: absolute;
  top: 11px;
  left: 11px;
  display: grid;
  gap: 5px;
}
.view-tools button {
  width: 24px;
  height: 24px;
  border: 1px solid #5c5c5e;
  background: #3c3c3e;
}
.view-tools .on {
  border-color: #8a8078;
}
.view-tools svg {
  width: 22px;
  height: 22px;
}
.caption {
  position: absolute;
  left: 26%;
  bottom: 61px;
  margin: 0;
  color: #f0bc20;
  font-family: "Open Sans", sans-serif;
  font-size: 45px;
  line-height: 60px;
  font-weight: 600;
  text-shadow: 3px 3px 3px rgba(0, 0, 0, 0.7);
}

/* right side */
.side {
  width: 300px;
  display: flex;
  flex-direction: column;
  border-left: 1px solid #161616;
}
.browser {
  flex: 490;
  border-bottom: 2px solid #151515;
}
.property {
  flex: 514;
  padding-top: 3px;
}
.property .titlebar {
  height: 24px;
}
.tabs {
  height: 19px;
  display: flex;
  padding-top: 1px;
  background: #181818;
  color: #484848;
}
.tabs button {
  flex: 1 1 auto;
  border-right: 1px solid #242424;
}
.tabs .active {
  background: #2c2c2d;
  color: #eee;
}
.more {
  width: 9px;
  border-bottom: 1px solid #ccc;
}
.actions {
  display: grid;
  grid-template-columns: repeat(3, 1fr);
  gap: 6px;
  margin: 15px 2px 0 60px;
}
.actions button {
  height: 26px;
  background: #2a2a2c;
  color: #a0a0a0;
}
.actions button:disabled {
  padding-left: 12px;
  color: #444;
}
.fabrics {
  list-style: none;
  margin: 4px 12px 0 8px;
  padding: 0 0 0 8px;
  border-top: 1px solid #111;
}
.fabrics li {
  display: flex;
  align-items: center;
  height: 47px;
  padding-left: 6px;
  border-bottom: 1px solid #111;
}
.fabrics svg {
  width: 14px;
  height: 10px;
}
.swatch {
  width: 37px;
  height: 37px;
  margin: 0 9px 0 12px;
  background: #fff;
}

/* status bar */
.statusbar {
  height: 26px;
  display: flex;
  align-items: center;
  justify-content: space-between;
  padding: 0 14px 3px 11px;
  color: #444;
  font-size: 10px;
}
.layouts {
  display: flex;
  gap: 12px;
  padding-top: 7px;
}
.layouts button {
  width: 19px;
  height: 15px;
  display: flex;
  align-items: center;
  justify-content: center;
  border: 2px solid #707070;
  color: #8c8c8c;
  font-size: 9px;
  line-height: 9px;
}
.layouts i {
  width: 1px;
  height: 11px;
  background: #707070;
}
.layouts .reset {
  border: 0;
  margin-left: 9px;
}
.reset svg {
  width: 12px;
  height: 12px;
}
```
